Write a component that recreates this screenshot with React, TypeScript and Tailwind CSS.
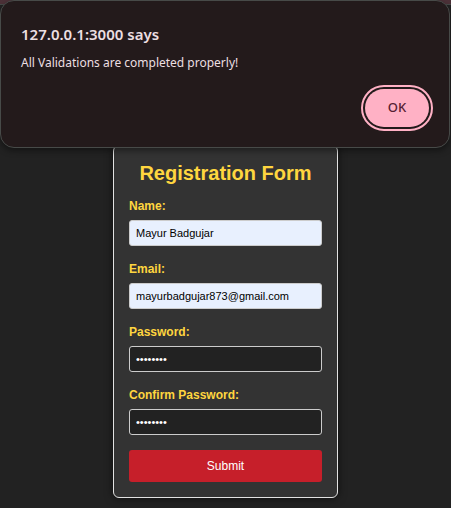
import { useState } from "react";

type FieldProps = {
  id: string;
  label: string;
  type: string;
  initial: string;
  filled?: boolean;
};

function Field({ id, label, type, initial, filled = false }: FieldProps) {
  const [value, setValue] = useState(initial);
  return (
    <div className="mb-[15px] flex flex-col gap-1.5">
      <label htmlFor={id} className="text-xs leading-4 font-bold text-[#ffd63f]">
        {label}
      </label>
      <input
        id={id}
        type={type}
        value={value}
        onChange={(e) => setValue(e.target.value)}
        className={
          filled
            ? "h-[26px] w-full rounded-[3px] border border-[#cccccc] bg-[#e8f0fe] px-1.5 text-[11px] text-black outline-none"
            : "h-[26px] w-full rounded-[3px] border border-[#cccccc] bg-[#222222] px-1.5 text-[11px] text-white outline-none"
        }
      />
    </div>
  );
}

function AlertDialog() {
  return (
    <div
      role="alertdialog"
      aria-labelledby="alert-title"
      aria-describedby="alert-message"
      className="absolute top-0 right-px left-0 rounded-[14px] border border-[#474a48] bg-[#231a1b] px-5 pt-6 pb-5 font-['Noto_Sans',sans-serif] shadow-[0_3px_6px_rgba(0,0,0,0.4)]"
    >
      <h2 id="alert-title" className="text-[15px] leading-[18px] font-semibold text-[#ecdfe1]">
        127.0.0.1:3000 says
      </h2>
      <p id="alert-message" className="mt-[11px] text-xs leading-[18px] text-[#ecdfe1]">
        All Validations are completed properly!
      </p>
      <div className="mt-[17px] flex justify-end">
        <button
          type="button"
          className="h-[38px] w-16 rounded-[19px] bg-[#ffb1c5] text-[13px] font-medium text-[#551d32] outline-2 outline-offset-2 outline-[#ffb1c5]"
        >
          OK
        </button>
      </div>
    </div>
  );
}

export default function App() {
  return (
    <div className="relative min-h-screen bg-[#222222] font-['Liberation_Sans',Arial,sans-serif]">
      <div className="h-[5px] border-b border-[#474a48] bg-[#4c3138]" />
      <main className="flex justify-center pt-[140px] pb-[10px]">
        <form
          onSubmit={(e) => e.preventDefault()}
          className="w-[225px] rounded-md border border-[#e2e2e2] bg-[#333333] px-[15px] pt-[14px] pb-[15px] shadow-[0_0_8px_rgba(0,0,0,0.6)]"
        >
          <h1 className="mb-3 text-center text-xl leading-[26px] font-bold text-[#ffd63f]">
            Registration Form
          </h1>
          <Field id="name" label="Name:" type="text" initial="Mayur Badgujar" filled />
          <Field id="email" label="Email:" type="email" initial="mayurbadgujar873@gmail.com" filled />
          <Field id="password" label="Password:" type="password" initial="abcd1234" />
          <Field id="confirm" label="Confirm Password:" type="password" initial="abcd1234" />
          <button type="submit" className="h-8 w-full rounded-[3px] bg-[#c61f2a] text-xs text-white">
            Submit
          </button>
        </form>
      </main>
      <AlertDialog />
    </div>
  );
}
